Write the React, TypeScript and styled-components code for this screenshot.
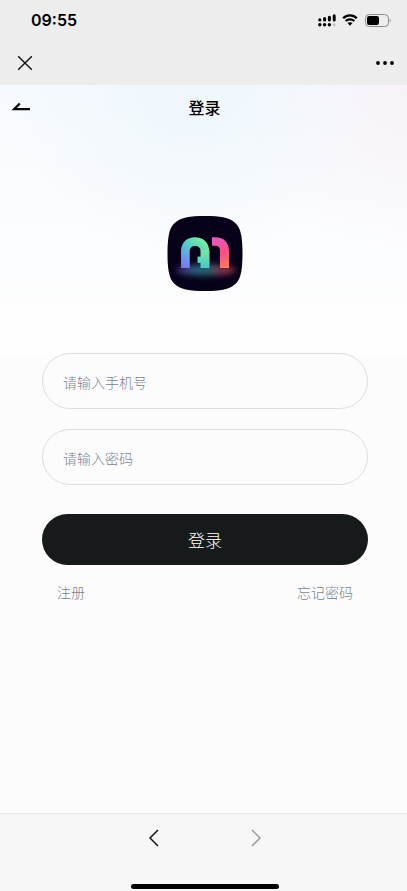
import React from "react";
import styled, { createGlobalStyle } from "styled-components";

const GlobalStyle = createGlobalStyle`
  *, *::before, *::after { box-sizing: border-box; }
  body {
    margin: 0;
    background: #fcfcfc;
    color: #000;
    font-family: Inter, "Noto Sans CJK SC", sans-serif;
  }
  button, input { font: inherit; }
  svg { display: block; }
`;

const Screen = styled.div`
  min-height: 100vh;
  display: flex;
  flex-direction: column;
`;

const BrowserChrome = styled.header`
  background: #ededed;
`;

const StatusBar = styled.div`
  height: 40px;
  padding: 0 16px 0 31px;
  display: flex;
  align-items: center;
  justify-content: space-between;
`;

const Time = styled.time`
  font-size: 16px;
  line-height: 20px;
  font-weight: 600;
`;

const StatusIcons = styled.div`
  display: flex;
  align-items: center;
  gap: 6px;
`;

const BrowserBar = styled.div`
  height: 45px;
  padding: 0 8px 0 11px;
  display: flex;
  align-items: center;
  justify-content: space-between;
`;

const IconButton = styled.button`
  width: 28px;
  height: 28px;
  padding: 0;
  border: 0;
  background: none;
  color: #111;
  display: grid;
  place-items: center;

  &:disabled { color: #999; }
`;

const Page = styled.main`
  flex: 1;
  background:
    radial-gradient(ellipse 180px 180px at 47% 0, rgba(236, 246, 251, 0.8), rgba(236, 246, 251, 0)) no-repeat,
    radial-gradient(ellipse 170px 170px at 100% 0, rgba(248, 241, 247, 0.85), rgba(248, 241, 247, 0)) no-repeat,
    linear-gradient(#f6faff, #f9fbfe 80px, #fcfdfe 170px, #fefefe 271px, #fcfcfc 271px) no-repeat,
    #fcfcfc;
`;

const TitleBar = styled.div`
  height: 45px;
  padding: 0 7px;
  display: grid;
  grid-template-columns: 28px 1fr 26px;
  align-items: center;
`;

const Title = styled.h1`
  margin: 0;
  text-align: center;
  font-size: 16px;
  line-height: 24px;
  font-weight: 500;
`;

const Content = styled.div`
  padding: 86px 39px 0 42px;
  display: flex;
  flex-direction: column;
  align-items: center;
`;

const LoginForm = styled.form`
  width: 100%;
  margin-top: 61px;
  display: flex;
  flex-direction: column;
`;

const Field = styled.input`
  width: 100%;
  height: 56px;
  margin-bottom: 20px;
  padding: 2px 20px 0;
  border: 1px solid #dddee4;
  border-radius: 28px;
  background: #fcfcfd;
  color: #151a1a;
  font-size: 14px;
  font-weight: 300;
  outline: none;

  &::placeholder { color: #7d818d; opacity: 1; }
  &:focus { border-color: #858995; }
`;

const SubmitButton = styled.button`
  height: 51px;
  margin-top: 9px;
  padding: 2px 0 0;
  border: 0;
  border-radius: 26px;
  background: #161a1a;
  color: #fff;
  font-size: 17px;
  line-height: 24px;
  font-weight: 300;
`;

const Links = styled.nav`
  padding: 18px 15px 0;
  display: flex;
  justify-content: space-between;
`;

const TextLink = styled.a`
  color: #7d818d;
  font-size: 14px;
  line-height: 20px;
  font-weight: 300;
  text-decoration: none;
`;

const BottomBar = styled.footer`
  height: 78px;
  padding: 10px 0 2px 2px;
  border-top: 1px solid #eaeaea;
  background: #f7f7f7;
  display: flex;
  flex-direction: column;
  align-items: center;
  justify-content: space-between;
`;

const HistoryButtons = styled.div`
  display: flex;
  gap: 74px;
`;

const HomeIndicator = styled.div`
  width: 148px;
  height: 5px;
  border-radius: 3px;
  background: #000;
`;

const SignalIcon = () => (
  <svg width="18" height="13" viewBox="0 0 18 13" aria-hidden="true">
    <g stroke="#000" strokeWidth="3" strokeLinecap="round">
      <path d="M1.8 5.8V6M6.6 4.6V6M11.4 3.2V6M16.2 1.8V6" />
    </g>
    <circle cx="1.8" cy="10.8" r="1.7" />
    <circle cx="6.6" cy="10.8" r="1.7" />
    <circle cx="11.4" cy="10.8" r="1.7" />
    <circle cx="16.2" cy="10.8" r="1.5" fill="#c4c4c4" />
  </svg>
);

const WifiIcon = () => (
  <svg width="16" height="12" viewBox="0 0 16 12" aria-hidden="true">
    <path d="M1.2 4.3C5 .5 11 .5 14.8 4.3M3.7 7C6.1 4.7 9.9 4.7 12.3 7" fill="none" stroke="#000" strokeWidth="2.3" />
    <path d="M5.5 9.1C6.9 7.8 9.1 7.8 10.5 9.1L8 11.7Z" />
  </svg>
);

const BatteryIcon = () => (
  <svg width="27" height="13" viewBox="0 0 27 13" aria-hidden="true">
    <rect x="1.500" y=".5" width="23" height="12" rx="3.8" fill="none" stroke="#8c8c8c" />
    <rect x="3" y="2" width="12" height="9" rx="2.2" />
    <path d="M25.700 4.5Q27.500 6.5 25.700 8.5Z" fill="#8c8c8c" />
  </svg>
);

const CloseIcon = () => (
  <svg width="16" height="16" viewBox="0 0 16 16" aria-hidden="true">
    <path d="M1.2 1.2 14.8 14.8M14.8 1.2 1.2 14.8" stroke="currentColor" strokeWidth="1.4" />
  </svg>
);

const MoreIcon = () => (
  <svg width="20" height="6" viewBox="0 0 20 6" aria-hidden="true">
    <circle cx="3" cy="3" r="1.9" />
    <circle cx="10" cy="3" r="1.9" />
    <circle cx="17" cy="3" r="1.9" />
  </svg>
);

const BackArrowIcon = () => (
  <svg width="20" height="12" viewBox="0 0 20 12" aria-hidden="true">
    <path d="M19 7.200H3.200L8.800 1.500" fill="none" stroke="#080808" strokeWidth="2.300" />
  </svg>
);

const ChevronIcon = ({ forward = false }: { forward?: boolean }) => (
  <svg width="10" height="18" viewBox="0 0 10 18" aria-hidden="true">
    <path
      d={forward ? "M1 1 9 9 1 17" : "M9 1 1 9 9 17"}
      fill="none"
      stroke="currentColor"
      strokeWidth="1.5"
    />
  </svg>
);

const Logo = () => (
  <svg width="76" height="76" viewBox="0 0 76 76" role="img" aria-label="A1">
    <defs>
      <linearGradient id="arch" gradientUnits="userSpaceOnUse" x1="14" y1="52" x2="38" y2="24">
        <stop offset="0" stopColor="#8b66f5" />
        <stop offset=".3" stopColor="#659fea" />
        <stop offset=".62" stopColor="#52cfc5" />
        <stop offset="1" stopColor="#7bf298" />
      </linearGradient>
      <linearGradient id="archSide" gradientUnits="userSpaceOnUse" x1="0" y1="30" x2="0" y2="52">
        <stop offset="0" stopColor="#7bf298" />
        <stop offset="1" stopColor="#4bc7c9" />
      </linearGradient>
      <linearGradient id="one" gradientUnits="userSpaceOnUse" x1="48" y1="21" x2="58" y2="52">
        <stop offset="0" stopColor="#e95bc2" />
        <stop offset=".55" stopColor="#f94f85" />
        <stop offset="1" stopColor="#fb7c60" />
      </linearGradient>
      <linearGradient id="glow" x1="0" y1="0" x2="1" y2="0">
        <stop offset="0" stopColor="#6548ba" />
        <stop offset=".38" stopColor="#2c8a9c" />
        <stop offset=".58" stopColor="#398487" />
        <stop offset=".74" stopColor="#b33e69" />
        <stop offset="1" stopColor="#c75147" />
      </linearGradient>
      <filter id="soften" x="-30%" y="-150%" width="160%" height="400%">
        <feGaussianBlur stdDeviation="3.4" />
      </filter>
    </defs>
    <path d="M38 0C46 0 52 .4 56 1.300C67 3.500 72.500 9 74.200 19C75.100 24 75.500 30 75.500 37.500S75.100 51 74.200 56C72.500 66 67 71.500 56 73.700C52 74.600 46 75 38 75S24 74.600 20 73.700C9 71.500 3.500 66 1.800 56C.9 51 .5 45 .5 37.500S.9 24 1.800 19C3.500 9 9 3.500 20 1.300C24 .4 30 0 38 0Z" fill="#070019" />
    <ellipse cx="39" cy="54" rx="30" ry="5.500" fill="url(#glow)" filter="url(#soften)" opacity=".75" />
    <path d="M14 52V35.500C14 26.500 20 21.300 28 21.300S42.300 26.500 42.300 35.500V52H33.700V46.700H30.700V40.700H33.700V35.500C33.700 32 31.500 30 28.200 30S22.700 32 22.700 35.500V52Z" fill="url(#arch)" />
    <path d="M42.300 34V52H33.700V46.700H30.700V40.700H33.700V34Z" fill="url(#archSide)" />
    <path d="M45 21.300H48C57 21.300 62 26.500 62 35V52H53V35C53 31.500 51.500 29.700 48 29.700H45Z" fill="url(#one)" />
  </svg>
);

export default function App() {
  return (
    <Screen>
      <GlobalStyle />
      <BrowserChrome>
        <StatusBar>
          <Time>09:55</Time>
          <StatusIcons>
            <SignalIcon />
            <WifiIcon />
            <BatteryIcon />
          </StatusIcons>
        </StatusBar>
        <BrowserBar>
          <IconButton type="button" aria-label="关闭"><CloseIcon /></IconButton>
          <IconButton type="button" aria-label="更多"><MoreIcon /></IconButton>
        </BrowserBar>
      </BrowserChrome>
      <Page>
        <TitleBar>
          <IconButton type="button" aria-label="返回"><BackArrowIcon /></IconButton>
          <Title>登录</Title>
        </TitleBar>
        <Content>
          <Logo />
          <LoginForm onSubmit={(event) => event.preventDefault()}>
            <Field type="tel" name="phone" aria-label="手机号" placeholder="请输入手机号" />
            <Field type="password" name="password" aria-label="密码" placeholder="请输入密码" />
            <SubmitButton type="submit">登录</SubmitButton>
            <Links>
              <TextLink href="#register">注册</TextLink>
              <TextLink href="#forgot">忘记密码</TextLink>
            </Links>
          </LoginForm>
        </Content>
      </Page>
      <BottomBar>
        <HistoryButtons>
          <IconButton type="button" aria-label="后退"><ChevronIcon /></IconButton>
          <IconButton type="button" aria-label="前进" disabled><ChevronIcon forward /></IconButton>
        </HistoryButtons>
        <HomeIndicator />
      </BottomBar>
    </Screen>
  );
}
